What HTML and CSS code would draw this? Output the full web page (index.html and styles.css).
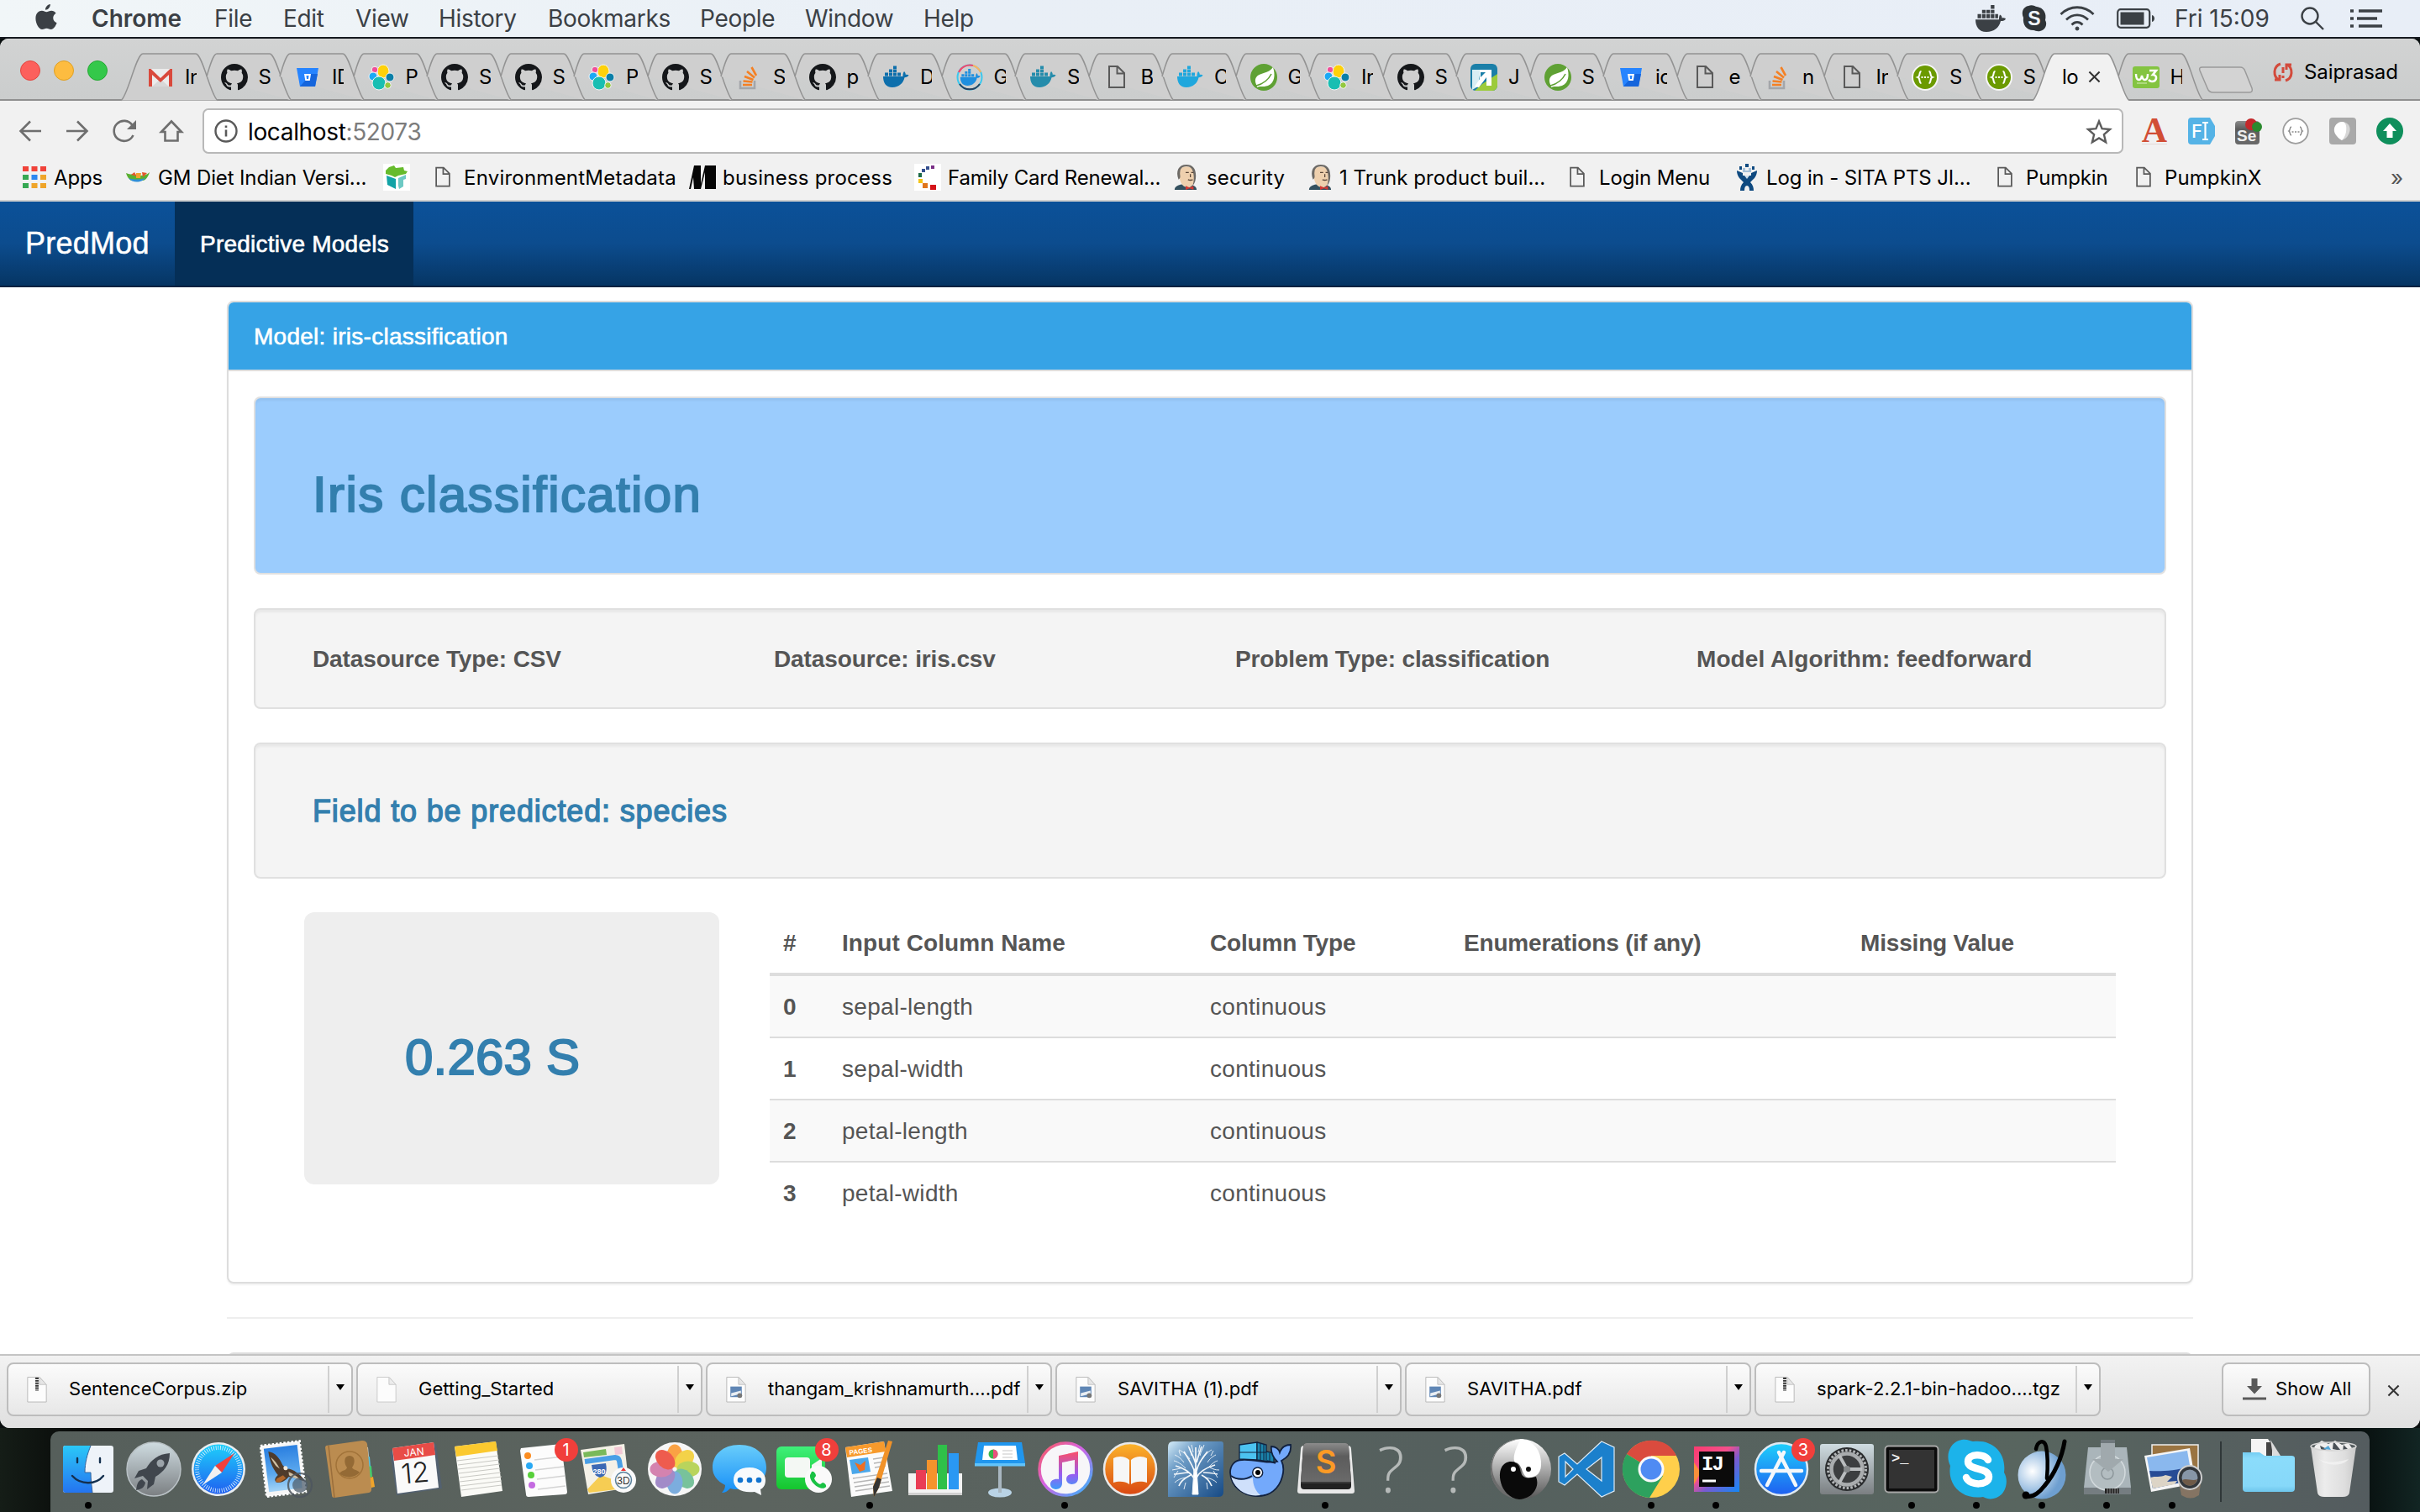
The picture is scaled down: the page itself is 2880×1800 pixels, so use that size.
FILE: index.html
```html
<!DOCTYPE html>
<html lang="en">
<head>
<meta charset="utf-8">
<title>PredMod</title>
<link rel="stylesheet" href="styles.css">
</head>
<body>
<svg class="defs" width="0" height="0">
  <defs>
    <linearGradient id="gFinder" x1="0" y1="0" x2="0" y2="1"><stop offset="0" stop-color="#2bc8f8"/><stop offset="1" stop-color="#2474f0"/></linearGradient>
    <linearGradient id="gSilver" x1="0" y1="0" x2="0" y2="1"><stop offset="0" stop-color="#cfdce1"/><stop offset="1" stop-color="#7b7f82"/></linearGradient>
    <linearGradient id="gBlue" x1="0" y1="0" x2="0" y2="1"><stop offset="0" stop-color="#1ed0fb"/><stop offset="1" stop-color="#1f5ff0"/></linearGradient>
    <linearGradient id="gSky" x1="0" y1="0" x2="0" y2="1"><stop offset="0" stop-color="#2a7fe0"/><stop offset=".6" stop-color="#5ba8ee"/><stop offset="1" stop-color="#a5d4f7"/></linearGradient>
    <linearGradient id="gMsg" x1="0" y1="0" x2="0" y2="1"><stop offset="0" stop-color="#69cdfb"/><stop offset="1" stop-color="#178ff7"/></linearGradient>
    <linearGradient id="gGreen" x1="0" y1="0" x2="0" y2="1"><stop offset="0" stop-color="#3ff07a"/><stop offset="1" stop-color="#15c52e"/></linearGradient>
    <linearGradient id="gOrange" x1="0" y1="0" x2="0" y2="1"><stop offset="0" stop-color="#fcb52b"/><stop offset="1" stop-color="#d94712"/></linearGradient>
    <linearGradient id="gTunes" x1="0" y1="0" x2="1" y2="1"><stop offset="0" stop-color="#fb5a57"/><stop offset=".45" stop-color="#d463e6"/><stop offset="1" stop-color="#2bb9fb"/></linearGradient>
    <linearGradient id="gNote" x1="0" y1="0" x2="0" y2="1"><stop offset="0" stop-color="#fb4f68"/><stop offset=".6" stop-color="#9a5cf0"/><stop offset="1" stop-color="#3d9bfa"/></linearGradient>
    <linearGradient id="gTree" x1="0" y1="0" x2="1" y2="1"><stop offset="0" stop-color="#d5ecf8"/><stop offset=".3" stop-color="#6d9cc6"/><stop offset="1" stop-color="#164a85"/></linearGradient>
    <linearGradient id="gDark" x1="0" y1="0" x2="0" y2="1"><stop offset="0" stop-color="#8b8b8b"/><stop offset=".35" stop-color="#5c5c5c"/><stop offset="1" stop-color="#6a6a6a"/></linearGradient>
    <linearGradient id="gYin" x1="0" y1="0" x2="0" y2="1"><stop offset="0" stop-color="#fff"/><stop offset="1" stop-color="#555"/></linearGradient>
    <linearGradient id="gFold" x1="0" y1="0" x2="0" y2="1"><stop offset="0" stop-color="#74cdf3"/><stop offset=".15" stop-color="#8bdcfb"/><stop offset=".85" stop-color="#86d8f9"/><stop offset="1" stop-color="#6ec6ec"/></linearGradient>
    <linearGradient id="gIj" x1="0" y1="0" x2="1" y2="1"><stop offset="0" stop-color="#fb3b6f"/><stop offset=".4" stop-color="#f4508c"/><stop offset=".6" stop-color="#7a5ad0"/><stop offset="1" stop-color="#1288f6"/></linearGradient>
    <radialGradient id="gOrb" cx=".3" cy=".42" r=".6"><stop offset="0" stop-color="#fff"/><stop offset=".6" stop-color="#a9c8e6"/><stop offset="1" stop-color="#6e9fd0"/></radialGradient>
    <linearGradient id="gTrash" x1="0" y1="0" x2="1" y2="0"><stop offset="0" stop-color="#d4d4d4"/><stop offset=".3" stop-color="#ececec"/><stop offset=".75" stop-color="#dedede"/><stop offset="1" stop-color="#c8c8c8"/></linearGradient>

    <!-- favicons, 32 x 32 -->
    <symbol id="f-doc" viewBox="0 0 32 32"><path d="M7 3h10l8 8v17H7z M16.500 3v8.500H25" fill="none" stroke="#5a5a5a" stroke-width="2"/></symbol>
    <symbol id="f-gmail" viewBox="0 0 32 32"><path d="M2 6h28v21H2z" fill="#ececec"/><path d="M6 27l10-9 10 9z" fill="#d8d8d8"/><path d="M2 27V6h2.500L16 17 27.500 6H30v21h-4V13L16 22 6 13v14z" fill="#d9493c"/></symbol>
    <symbol id="f-gh" viewBox="0 0 16 16"><path fill="#15171a" d="M8 0C3.580 0 0 3.580 0 8c0 3.540 2.290 6.530 5.470 7.590.4.070.55-.17.55-.38 0-.19-.01-.82-.01-1.490-2.010.37-2.530-.49-2.690-.94-.09-.23-.48-.94-.82-1.130-.28-.15-.68-.52-.01-.53.63-.01 1.080.58 1.230.82.720 1.210 1.870.87 2.330.66.070-.52.28-.87.510-1.070-1.780-.2-3.640-.89-3.640-3.950 0-.87.31-1.590.82-2.150-.08-.2-.36-1.020.08-2.120 0 0 .67-.21 2.200.82.64-.18 1.320-.27 2-.27s1.360.09 2 .27c1.530-1.040 2.200-.82 2.200-.82.44 1.100.16 1.920.08 2.120.51.56.82 1.270.82 2.150 0 3.070-1.870 3.750-3.650 3.950.29.25.54.73.54 1.480 0 1.070-.01 1.930-.01 2.200 0 .21.15.46.55.38A8.010 8.010 0 0016 8c0-4.420-3.580-8-8-8z"/></symbol>
    <symbol id="f-bb" viewBox="0 0 32 32"><path d="M3 5h26l-4 22H7z" fill="#2684ff"/><path d="M20 12h8l-3 15H7l6-7h6z" fill="#1565dc"/><path d="M12 12h8l-1.300 8h-5.400z" fill="#fff"/><path d="M14.500 14h3l-.5 4h-2z" fill="#2684ff"/></symbol>
    <symbol id="f-el" viewBox="0 0 32 32"><g stroke="#f4f4f4" stroke-width="1"><ellipse cx="18" cy="9" rx="7" ry="8" fill="#fed10a"/><circle cx="8" cy="7" r="3.800" fill="#f04e98"/><circle cx="6" cy="15" r="5" fill="#1ba9f5"/><circle cx="26" cy="16" r="5" fill="#0b7fa8"/><ellipse cx="13" cy="23" rx="8" ry="8" fill="#18beb2"/><circle cx="23.500" cy="25.500" r="3.800" fill="#93c83e"/></g></symbol>
    <symbol id="f-so" viewBox="0 0 32 32"><path d="M6 20v9h17v-9" fill="none" stroke="#a3a6aa" stroke-width="2.600"/><path d="M9 25h11M9.500 20.500l11 1M11 15l10.500 4M14 9l9 7.500M19.500 4l5.500 10" stroke="#f48024" stroke-width="2.600"/></symbol>
    <symbol id="f-dk" viewBox="0 0 32 32"><path d="M1 15h23.500c0-2 0-4 1.500-6 1 1 2 2.500 1.800 4 1.700-.4 3 0 3.700.6-1 2-3 2.700-5 2.700C25 23 20 28 12 28 4 28 1 22 1 15z"/><path d="M3 10.500h4v4H3zM8 10.500h4v4H8zM13 10.500h4v4h-4zM18 10.500h4v4h-4zM8 6.500h4V10H8zM13 6.500h4V10h-4zM13 2.500h4V6h-4z"/></symbol>
    <symbol id="f-ring" viewBox="0 0 32 32"><circle cx="16" cy="16" r="14.500" fill="none" stroke="#3bc8ee" stroke-width="2"/><path d="M3 10A14.500 14.500 0 0120 2" fill="none" stroke="#f4476b" stroke-width="2"/><path d="M20 2a14.500 14.500 0 019 8" fill="none" stroke="#fdb35e" stroke-width="2"/><path d="M4 24a14.500 14.500 0 0024 0" fill="none" stroke="#27405e" stroke-width="2"/><use href="#f-dk" x="4" y="4" width="25" height="25" fill="#1f8fe0"/></symbol>
    <symbol id="f-sp" viewBox="0 0 32 32"><circle cx="16" cy="16" r="16" fill="#5fa134"/><path d="M27 4c3 9 2 19-6 22-6 2-11 0-13 2 0-3-4-7-1-12C11 10 22 12 27 4z" fill="#fff"/><path d="M7 26c8-2 14-6 18-14" stroke="#5fa134" stroke-width="1.600" fill="none"/></symbol>
    <symbol id="f-fa" viewBox="0 0 32 32"><rect width="32" height="32" rx="6" fill="#1b7fa8"/><path d="M32 12v14a6 6 0 01-6 6H5l9-8z" fill="#9ccb3c"/><path d="M2 7h10l-3 20-7 4z" fill="#d9eef4"/><path d="M11 7h14v19h-6V16l-9 12-5-1 6-9z" fill="#fff"/><path d="M12 10h6l-6 6z" fill="#1b7fa8"/></symbol>
    <symbol id="f-sw" viewBox="0 0 32 32"><circle cx="16" cy="16" r="15" fill="#6b9a00" stroke="#f5f5f5" stroke-width="2"/><path d="M11.500 9c-3 0-1 6-4 7 3 1 1 7 4 7M20.500 9c3 0 1 6 4 7-3 1-1 7-4 7" fill="none" stroke="#fff" stroke-width="2"/><path d="M11.500 16h9" stroke="#fff" stroke-width="2.200" stroke-dasharray="2 1.500"/></symbol>
    <symbol id="f-w3" viewBox="0 0 32 32"><rect y="3" width="32" height="26" rx="3" fill="#84c441"/><path d="M4 12c0 9 6 9 7 2 1 7 7 7 7-2" fill="none" stroke="#fff" stroke-width="2.400"/><path d="M20 8h8l-4 5c6 0 5 8-1 8-2 0-3-1-4-2" fill="none" stroke="#fff" stroke-width="2.600"/><path d="M5 23h12" stroke="#d8f0b8" stroke-width="1.200"/></symbol>
    <symbol id="f-jk" viewBox="0 0 32 32"><path d="M2 32c0-5 5-6 9-7h11c4 1 8 3 8 7z" fill="#33505f"/><path d="M8 8c2-8 20-8 20 4 0 12-4 17-9 17-8 0-12-9-11-21z" fill="#eed0ae"/><path d="M7 19C3 8 7 0 17 0c8 0 12 5 12 14 0 5-1 9-4 13 1-5 2-8 1-15-1-7-4-10-9-10C11 2 9 6 9 9c-1 4 2 7-2 10z" fill="#6d6a66"/><path d="M16 10h4M23 10h3M19 19c2 1 4 1 6 0M22 12v4" stroke="#5a4638" stroke-width="1.400" fill="none"/><path d="M16 27l5 2 5-2v5l-5-2-5 2z" fill="#d33833"/></symbol>
  </defs>
</svg>

<header class="menubar">
  <svg class="apple" viewBox="0 0 26 32"><path fill="#3b4045" d="M18 0c.3 3-2.500 7-6 7C11.600 4 14.500.5 18 0zM25 11c-5 3-4.500 9.500 1 12-1.500 4-4 8-7 8-2.200 0-3-1.300-5.500-1.300S10 31 8 31C4 31 0 23.500 0 17.500 0 11 4 8 7.600 8c2.400 0 4.200 1.500 5.700 1.500S17 8 19.500 8C21.500 8 23.700 9 25 11z"/></svg>
  <nav class="menus"><b class="m1">Chrome</b><span class="m2">File</span><span class="m3">Edit</span><span class="m4">View</span><span class="m5">History</span><span class="m6">Bookmarks</span><span class="m7">People</span><span class="m8">Window</span><span class="m9">Help</span></nav>
  <div class="status">
    <svg width="36" height="32" viewBox="0 0 36 28" preserveAspectRatio="none" fill="#3b4045"><path d="M0 15h28c0-2 0-3 1-5 2 1 2.500 2 2.500 3.500 1.500-.3 3.500 0 4.500.7-1 2-3 2.500-6 2.500C28 24 22 28 13 28 4 28 0 22 0 15z"/><path d="M2.500 9.500h4.300v4.300H2.500zM7.800 9.500h4.300v4.300H7.800zM13 9.500h4.300v4.300H13zM18.200 9.500h4.300v4.300h-4.300zM23.400 9.500h3.500v4.300h-3.500zM7.800 5h4.300v3.500H7.800zM13 5h4.300v3.500H13zM18.200 5h4.300v3.500h-4.300zM18.200 0h4.300v4h-4.300z"/></svg>
    <svg class="s-skype" width="32" height="32" viewBox="0 0 32 32"><path d="M9 1c5-2 8 1 10 1 8 1 12 8 10 16 3 5 0 12-6 13-4 1-6-1-8-1C6 30 2 23 3 15 0 8 3 2 9 1z" fill="#2f3438"/><text x="16" y="24" text-anchor="middle" class="t-sk">S</text></svg>
    <svg class="s-wifi" width="42" height="30" viewBox="0 0 42 30" fill="none" stroke="#3b4045" stroke-width="2.800"><path d="M1.500 10c11-11 28-11 39 0M8 16.500c7.500-7.500 18.500-7.500 26 0M14.500 22.500c4-4 9-4 13 0"/><circle cx="21" cy="27" r="2" fill="#3b4045" stroke-width="1"/></svg>
    <svg class="s-batt" width="46" height="24" viewBox="0 0 46 24"><rect x="1.200" y="1.200" width="38" height="21.600" rx="3.500" fill="none" stroke="#3b4045" stroke-width="2.200"/><rect x="4.500" y="4.500" width="28" height="15" fill="#3b4045"/><path d="M42 8c4 1 4 7 0 8z" fill="#3b4045"/></svg>
    <span class="clock">Fri 15:09</span>
    <svg class="s-find" width="30" height="28" viewBox="0 0 30 28" fill="none" stroke="#3b4045" stroke-width="2.400"><circle cx="12" cy="11" r="9.500"/><path d="M19 18l9 9"/></svg>
    <svg class="s-list" width="38" height="22" viewBox="0 0 38 22" fill="none" stroke="#3b4045" stroke-width="3.600"><path d="M0 2h4M10 2h28M0 11h4M8 11h24M0 20h4M10 20h28"/></svg>
  </div>
</header>

<main class="window">
  <div class="tabstrip">
    <div class="lights"><i class="red"></i><i class="yellow"></i><i class="green"></i></div>
    <div class="tabs">
      <div class="tab"><svg class="shape" viewBox="0 0 116 57"><path d="M0 56.500C8 52 18 1 26 1h63C97 1 107 52 115 56.500"/></svg><svg class="fav"><use href="#f-gmail"/></svg><span>In</span></div>
      <div class="tab"><svg class="shape" viewBox="0 0 116 57"><path d="M14 28C18 14 22 1 26 1h63C97 1 107 52 115 56.500"/></svg><svg class="fav"><use href="#f-gh"/></svg><span>S</span></div>
      <div class="tab"><svg class="shape" viewBox="0 0 116 57"><path d="M14 28C18 14 22 1 26 1h63C97 1 107 52 115 56.500"/></svg><svg class="fav"><use href="#f-bb"/></svg><span>ID</span></div>
      <div class="tab"><svg class="shape" viewBox="0 0 116 57"><path d="M14 28C18 14 22 1 26 1h63C97 1 107 52 115 56.500"/></svg><svg class="fav"><use href="#f-el"/></svg><span>P</span></div>
      <div class="tab"><svg class="shape" viewBox="0 0 116 57"><path d="M14 28C18 14 22 1 26 1h63C97 1 107 52 115 56.500"/></svg><svg class="fav"><use href="#f-gh"/></svg><span>S</span></div>
      <div class="tab"><svg class="shape" viewBox="0 0 116 57"><path d="M14 28C18 14 22 1 26 1h63C97 1 107 52 115 56.500"/></svg><svg class="fav"><use href="#f-gh"/></svg><span>S</span></div>
      <div class="tab"><svg class="shape" viewBox="0 0 116 57"><path d="M14 28C18 14 22 1 26 1h63C97 1 107 52 115 56.500"/></svg><svg class="fav"><use href="#f-el"/></svg><span>P</span></div>
      <div class="tab"><svg class="shape" viewBox="0 0 116 57"><path d="M14 28C18 14 22 1 26 1h63C97 1 107 52 115 56.500"/></svg><svg class="fav"><use href="#f-gh"/></svg><span>S</span></div>
      <div class="tab"><svg class="shape" viewBox="0 0 116 57"><path d="M14 28C18 14 22 1 26 1h63C97 1 107 52 115 56.500"/></svg><svg class="fav"><use href="#f-so"/></svg><span>S</span></div>
      <div class="tab"><svg class="shape" viewBox="0 0 116 57"><path d="M14 28C18 14 22 1 26 1h63C97 1 107 52 115 56.500"/></svg><svg class="fav"><use href="#f-gh"/></svg><span>p</span></div>
      <div class="tab"><svg class="shape" viewBox="0 0 116 57"><path d="M14 28C18 14 22 1 26 1h63C97 1 107 52 115 56.500"/></svg><svg class="fav dk1"><use href="#f-dk"/></svg><span>D</span></div>
      <div class="tab"><svg class="shape" viewBox="0 0 116 57"><path d="M14 28C18 14 22 1 26 1h63C97 1 107 52 115 56.500"/></svg><svg class="fav"><use href="#f-ring"/></svg><span>G</span></div>
      <div class="tab"><svg class="shape" viewBox="0 0 116 57"><path d="M14 28C18 14 22 1 26 1h63C97 1 107 52 115 56.500"/></svg><svg class="fav dk2"><use href="#f-dk"/></svg><span>S</span></div>
      <div class="tab"><svg class="shape" viewBox="0 0 116 57"><path d="M14 28C18 14 22 1 26 1h63C97 1 107 52 115 56.500"/></svg><svg class="fav"><use href="#f-doc"/></svg><span>B</span></div>
      <div class="tab"><svg class="shape" viewBox="0 0 116 57"><path d="M14 28C18 14 22 1 26 1h63C97 1 107 52 115 56.500"/></svg><svg class="fav dk3"><use href="#f-dk"/></svg><span>C</span></div>
      <div class="tab"><svg class="shape" viewBox="0 0 116 57"><path d="M14 28C18 14 22 1 26 1h63C97 1 107 52 115 56.500"/></svg><svg class="fav"><use href="#f-sp"/></svg><span>G</span></div>
      <div class="tab"><svg class="shape" viewBox="0 0 116 57"><path d="M14 28C18 14 22 1 26 1h63C97 1 107 52 115 56.500"/></svg><svg class="fav"><use href="#f-el"/></svg><span>In</span></div>
      <div class="tab"><svg class="shape" viewBox="0 0 116 57"><path d="M14 28C18 14 22 1 26 1h63C97 1 107 52 115 56.500"/></svg><svg class="fav"><use href="#f-gh"/></svg><span>S</span></div>
      <div class="tab"><svg class="shape" viewBox="0 0 116 57"><path d="M14 28C18 14 22 1 26 1h63C97 1 107 52 115 56.500"/></svg><svg class="fav"><use href="#f-fa"/></svg><span>J</span></div>
      <div class="tab"><svg class="shape" viewBox="0 0 116 57"><path d="M14 28C18 14 22 1 26 1h63C97 1 107 52 115 56.500"/></svg><svg class="fav"><use href="#f-sp"/></svg><span>S</span></div>
      <div class="tab"><svg class="shape" viewBox="0 0 116 57"><path d="M14 28C18 14 22 1 26 1h63C97 1 107 52 115 56.500"/></svg><svg class="fav"><use href="#f-bb"/></svg><span>ic</span></div>
      <div class="tab"><svg class="shape" viewBox="0 0 116 57"><path d="M14 28C18 14 22 1 26 1h63C97 1 107 52 115 56.500"/></svg><svg class="fav"><use href="#f-doc"/></svg><span>e</span></div>
      <div class="tab"><svg class="shape" viewBox="0 0 116 57"><path d="M14 28C18 14 22 1 26 1h63C97 1 107 52 115 56.500"/></svg><svg class="fav"><use href="#f-so"/></svg><span>n</span></div>
      <div class="tab"><svg class="shape" viewBox="0 0 116 57"><path d="M14 28C18 14 22 1 26 1h63C97 1 107 52 115 56.500"/></svg><svg class="fav"><use href="#f-doc"/></svg><span>In</span></div>
      <div class="tab"><svg class="shape" viewBox="0 0 116 57"><path d="M14 28C18 14 22 1 26 1h63C97 1 107 52 115 56.500"/></svg><svg class="fav"><use href="#f-sw"/></svg><span>S</span></div>
      <div class="tab"><svg class="shape" viewBox="0 0 116 57"><path d="M14 28C18 14 22 1 26 1h63C97 1 107 52 115 56.500"/></svg><svg class="fav"><use href="#f-sw"/></svg><span>S</span></div>
      <div class="tab active"><svg class="shape" viewBox="0 0 116 58"><path class="fill" d="M0 58C8 52 18 1 26 1h63C97 1 107 52 116 58z"/><path d="M0 56.500C8 52 18 1 26 1h63C97 1 107 52 115 56.500"/></svg><span>lo</span><svg class="close" viewBox="0 0 16 16"><path d="M1.500 1.500l13 13M14.500 1.500l-13 13"/></svg></div>
      <div class="tab"><svg class="shape" viewBox="0 0 116 57"><path d="M14 28C18 14 22 1 26 1h63C97 1 107 52 115 56.500"/></svg><svg class="fav"><use href="#f-w3"/></svg><span>H</span></div>
    </div>
    <svg class="newtab" viewBox="0 0 66 32"><path d="M5 1h45c4 0 5 2 6 5l8 20c1 3 0 5-3 5H18c-4 0-6-2-7-5L2 5C1 2 2 1 5 1z"/></svg>
    <div class="profile"><svg width="26" height="24" viewBox="0 0 26 24" fill="none" stroke="#d34b3c" stroke-width="3"><path d="M10 2C1 5 1 17 8 21M3 21h6v-6M16 22c9-3 9-15 2-19M23 3h-6v6M13 6v7M13 16v3"/></svg><span>Saiprasad</span></div>
  </div>

  <div class="toolbar">
    <div class="navicons">
      <svg viewBox="0 0 28 28"><path d="M27 14H3M14 2.500L2.500 14 14 25.500"/></svg>
      <svg viewBox="0 0 28 28"><path d="M1 14h24M14 2.500L25.500 14 14 25.500"/></svg>
      <svg viewBox="0 0 28 28"><path d="M24.500 19A12 12 0 1123.500 7"/><path d="M28 1v11H17z" fill="#6e6e6e" stroke="none"/></svg>
      <svg viewBox="0 0 28 28"><path d="M14 2.500L2 15h4.500v10.500h15V15H26z"/></svg>
    </div>
    <div class="omnibox">
      <svg width="28" height="28" viewBox="0 0 28 28"><circle cx="14" cy="14" r="12.500" fill="none" stroke="#5a5a5a" stroke-width="2.400"/><path d="M14 12.500v8M14 7.500v2.600" stroke="#5a5a5a" stroke-width="2.600"/></svg>
      <span class="url">localhost<i>:52073</i></span>
      <svg class="star" width="30" height="29" viewBox="0 0 30 29"><path d="M15 2.500l3.600 8.700 9.400.8-7.100 6.200 2.200 9.100-8.100-4.900-8.100 4.900 2.200-9.100L2 12l9.400-.8z" fill="none" stroke="#5c5c5c" stroke-width="2.400"/></svg>
    </div>
    <div class="exts">
      <svg viewBox="0 0 32 32"><text x="16" y="29" text-anchor="middle" class="t-a">A</text><path d="M1 31.500h30" stroke="#e6d9d6"/></svg>
      <svg viewBox="0 0 32 32"><path d="M4 0h22l6 10v12l-6 10H4q-4 0-4-4V4q0-4 4-4z" fill="#55b3e6"/><text x="4" y="24" class="t-f">F</text><path d="M17 6h7M20.500 6v20M17 26h7" stroke="#fff" stroke-width="2.200"/></svg>
      <svg viewBox="0 0 32 32"><rect y="4" width="29" height="28" rx="4" fill="url(#gDark)"/><text x="2" y="28" class="t-se">Se</text><circle cx="19" cy="8" r="7" fill="#c4282b"/><circle cx="26" cy="11" r="6" fill="#2a8a2e"/></svg>
      <svg viewBox="0 0 32 32"><circle cx="16" cy="16" r="14.800" fill="#fff" stroke="#9d9d9d" stroke-width="1.800"/><path d="M11 11c-2.500 0-1 4-3 5 2 1 .5 5 3 5M21 11c2.500 0 1 4 3 5-2 1-.5 5-3 5" fill="none" stroke="#888" stroke-width="1.400"/><path d="M11.500 17h9" stroke="#888" stroke-width="1.600" stroke-dasharray="2 1.500"/></svg>
      <svg viewBox="0 0 32 32"><rect width="32" height="32" rx="4" fill="#a9a9a9"/><path d="M17 5c8 2 9 9 6 15-2 4-5 6-8 7-5-3-9-9-9-13 1-6 6-9 11-9z" fill="#d6d6d6"/><path d="M15 5c5 0 6 6 5 12-1 5-3 8-5 10C8 23 5 17 6 13c1-5 5-8 9-8z" fill="#fff"/></svg>
      <svg viewBox="0 0 32 32"><circle cx="16" cy="16" r="16" fill="#0f8f5c"/><path d="M16 7l8 9h-4.500v8h-7v-8H8z" fill="#fff"/></svg>
    </div>
  </div>

  <div class="bookmarks">
    <span class="bm b1"><svg width="28" height="28" viewBox="0 0 28 28"><path d="M0 1h7v6H0zM10.500 1h7v6h-7zM21 1h7v6h-7z" fill="#f0433a"/><path d="M0 11h7v6H0zM0 21h7v6H0z" fill="#36a853"/><path d="M10.500 11h7v6h-7z" fill="#2c87f0"/><path d="M21 11h7v6h-7zM10.500 21h7v6h-7zM21 21h7v6h-7z" fill="#efa52a"/></svg><em>Apps</em></span>
    <span class="bm b2"><svg width="28" height="28" viewBox="0 0 28 28"><path d="M0 9c4 2 7 1 9 2l8 1c4 0 8-1 11-4-2 7-6 10-8 10H6c-3-2-5-5-6-9z" fill="#59b031"/><path d="M6 11l4-3 3 5zM19 8l6 1-5 5z" fill="#e2562b"/><path d="M12 9h6l-1 6h-5z" fill="#f0a42c"/><path d="M3 15c7 2 13 2 20 0-3 5-15 7-20 0z" fill="#2f8fd6"/></svg><em>GM Diet Indian Versi...</em></span>
    <span class="bm b3"><svg width="32" height="32" viewBox="0 0 32 32"><rect width="32" height="32" fill="#fff"/><path d="M3 8l4-4 6-2 2 3 9-1 1 4 4 1-2 3-9 2-4 2-4-2-7-2z" fill="#66bb2c"/><path d="M4 14l11 4v12L5 25z" fill="#12a3a6"/><path d="M18 17l9-4v5l-3 1v8l-5 3-1-4z" fill="#6dc9c4"/></svg></span>
    <span class="bm b4"><svg width="28" height="28"><use href="#f-doc"/></svg><em>EnvironmentMetadata</em></span>
    <span class="bm b5"><svg width="32" height="32" viewBox="0 0 32 32"><path d="M0 30L6 2h8v22L19 2h13v28H19V10l-5 20H6L5 16 2 30z" fill="#060606"/></svg><em>business process</em></span>
    <span class="bm b6"><svg width="32" height="32" viewBox="0 0 32 32"><rect width="32" height="32" fill="#fff"/><path d="M20 2h4v4h-4z" fill="#7a2f86"/><path d="M14 3h4v4h-4zM9 6h4v4H9z" fill="#35508f"/><path d="M5 11h4v5H5z" fill="#1d6b48"/><path d="M5 18h5v5H5z" fill="#f3c417"/><path d="M10 23h6v6h-6z" fill="#e0761d"/><path d="M19 25h7v6h-7z" fill="#d4141a"/></svg><em>Family Card Renewal...</em></span>
    <span class="bm b7"><svg width="30" height="32"><use href="#f-jk"/></svg><em>security</em></span>
    <span class="bm b8"><svg width="30" height="32"><use href="#f-jk"/></svg><em>1 Trunk product buil...</em></span>
    <span class="bm b9"><svg width="28" height="28"><use href="#f-doc"/></svg><em>Login Menu</em></span>
    <span class="bm b10"><svg width="28" height="32" viewBox="0 0 28 32"><path d="M5 3h3v4H5zM12 0h4v4h-4zM20 3h3v4h-3zM2 8l7 3v3h10v-3l7-3c0 7-4 10-8 14 3 3 4 6 4 10h-5c0-4-1-6-3-6s-3 2-3 6H6c0-4 1-7 4-10C6 18 2 15 2 8z" fill="#0f4a80"/><path d="M9 5h3v3h4V5h3v5H9z" fill="#a5c1da"/><path d="M11 14h6l-3 4z" fill="#cfdfec"/></svg><em>Log in - SITA PTS JI...</em></span>
    <span class="bm b11"><svg width="28" height="28"><use href="#f-doc"/></svg><em>Pumpkin</em></span>
    <span class="bm b12"><svg width="28" height="28"><use href="#f-doc"/></svg><em>PumpkinX</em></span>
    <span class="more">»</span>
  </div>

  <section class="page">
    <nav class="navbar"><a class="brand">PredMod</a><a class="navlink">Predictive Models</a></nav>
    <div class="container">
      <article class="panel">
        <div class="panel-heading">Model: iris-classification</div>
        <div class="panel-body">
          <div class="well hero"><h2>Iris classification</h2></div>
          <div class="well info"><b>Datasource Type: CSV</b><b>Datasource: iris.csv</b><b>Problem Type: classification</b><b class="wide">Model Algorithm: feedforward</b></div>
          <div class="well field"><h4>Field to be predicted: species</h4></div>
          <div class="result">
            <div class="score"><h2>0.263 S</h2></div>
            <table>
              <colgroup><col class="c1"><col class="c2"><col class="c3"><col class="c4"><col class="c5"></colgroup>
              <thead><tr><th>#</th><th class="wide">Input Column Name</th><th>Column Type</th><th>Enumerations (if any)</th><th>Missing Value</th></tr></thead>
              <tbody>
                <tr><th>0</th><td>sepal-length</td><td>continuous</td><td></td><td></td></tr>
                <tr><th>1</th><td>sepal-width</td><td>continuous</td><td></td><td></td></tr>
                <tr><th>2</th><td>petal-length</td><td>continuous</td><td></td><td></td></tr>
                <tr><th>3</th><td>petal-width</td><td>continuous</td><td></td><td></td></tr>
              </tbody>
            </table>
          </div>
        </div>
      </article>
      <hr>
      <div class="footer-panel"></div>
    </div>
  </section>

  <footer class="shelf">
    <div class="dl"><svg viewBox="0 0 24 32"><path d="M.5.500h14.500l8.500 9v21.500H.5z" fill="#fcfcfc" stroke="#b9b9b9"/><path d="M15 .5v9h8.500z" fill="#e6e6e6" stroke="#c2c2c2"/><path d="M12 1v16" stroke="#333" stroke-width="4" stroke-dasharray="2 1"/></svg><span>SentenceCorpus.zip</span><i></i></div>
    <div class="dl"><svg viewBox="0 0 24 32"><path d="M.5.500h14.500l8.500 9v21.500H.5z" fill="#fcfcfc" stroke="#c9c9c9"/><path d="M15 .5v9h8.500z" fill="#ececec" stroke="#c9c9c9"/></svg><span>Getting_Started</span><i></i></div>
    <div class="dl"><svg viewBox="0 0 24 32"><path d="M.5.500h14.500l8.500 9v21.500H.5z" fill="#fcfcfc" stroke="#b9b9b9"/><path d="M15 .5v9h8.500z" fill="#e6e6e6" stroke="#c2c2c2"/><path d="M5 12h14v13H5z" fill="#5f86b5"/><path d="M6 20l12-3v4l-12 3z" fill="#e9eef3"/><circle cx="16.500" cy="23" r="3" fill="#777"/></svg><span>thangam_krishnamurth....pdf</span><i></i></div>
    <div class="dl"><svg viewBox="0 0 24 32"><path d="M.5.500h14.500l8.500 9v21.500H.5z" fill="#fcfcfc" stroke="#b9b9b9"/><path d="M15 .5v9h8.500z" fill="#e6e6e6" stroke="#c2c2c2"/><path d="M5 12h14v13H5z" fill="#5f86b5"/><path d="M6 20l12-3v4l-12 3z" fill="#e9eef3"/><circle cx="16.500" cy="23" r="3" fill="#777"/></svg><span>SAVITHA (1).pdf</span><i></i></div>
    <div class="dl"><svg viewBox="0 0 24 32"><path d="M.5.500h14.500l8.500 9v21.500H.5z" fill="#fcfcfc" stroke="#b9b9b9"/><path d="M15 .5v9h8.500z" fill="#e6e6e6" stroke="#c2c2c2"/><path d="M5 12h14v13H5z" fill="#5f86b5"/><path d="M6 20l12-3v4l-12 3z" fill="#e9eef3"/><circle cx="16.500" cy="23" r="3" fill="#777"/></svg><span>SAVITHA.pdf</span><i></i></div>
    <div class="dl"><svg viewBox="0 0 24 32"><path d="M.5.500h14.500l8.500 9v21.500H.5z" fill="#fcfcfc" stroke="#b9b9b9"/><path d="M15 .5v9h8.500z" fill="#e6e6e6" stroke="#c2c2c2"/><path d="M12 1v16" stroke="#333" stroke-width="4" stroke-dasharray="2 1"/></svg><span>spark-2.2.1-bin-hadoo....tgz</span><i></i></div>
    <div class="showall"><svg width="28" height="26" viewBox="0 0 28 26" fill="#5a5a5a"><path d="M10.500 0h7v9H23l-9 9.500L5 9h5.500zM0 22.500h28v3H0z"/></svg><span>Show All</span></div>
    <svg class="shelfclose" viewBox="0 0 16 16"><path d="M1.500 1.500l13 13M14.500 1.500l-13 13"/></svg>
  </footer>
</main>

<div class="desktop">
  <div class="dock">
    <div class="app on"><svg viewBox="0 0 72 72"><rect x="6" y="8" width="60" height="56" rx="3" fill="#eef3f9"/><path d="M9 8h30c-4 10-7 20-7 32h7c0 8 1 16 2 24H9q-3 0-3-3V11q0-3 3-3z" fill="url(#gFinder)"/><path d="M39 8c-4 10-7 20-7 32h7c0 8 1 16 2 24" fill="none" stroke="#37659c" stroke-width="1"/><path d="M23 23v5M50 23v5M17 44c10 11 28 11 37 0" fill="none" stroke="#14304f" stroke-width="2.400" stroke-linecap="round"/></svg></div>
    <div class="app"><svg viewBox="0 0 72 72"><circle cx="36" cy="36" r="32" fill="url(#gSilver)" stroke="#b9c1c5" stroke-width="1.500"/><path d="M55 17c-14 1-22 8-28 18l-9 3-5 9 10-3 6 6-1 10 8-6 2-9c10-6 17-14 17-28z" fill="#40464d"/><circle cx="44" cy="29" r="4.500" fill="#9ba3a9"/><path d="M22 48c-6 2-6 8-7 13 6-1 10-3 11-9z" fill="#40464d"/></svg></div>
    <div class="app"><svg viewBox="0 0 72 72"><circle cx="36" cy="36" r="32" fill="#e9edf0"/><circle cx="36" cy="36" r="29.500" fill="url(#gBlue)"/><circle cx="36" cy="36" r="25.500" fill="none" stroke="#dff1fc" stroke-width="5" stroke-dasharray=".8 1.900"/><path d="M55 17L40 40l-8-8z" fill="#f2403c"/><path d="M17 55l15-23 8 8z" fill="#f1f1f1"/></svg></div>
    <div class="app"><svg viewBox="0 0 72 72"><g transform="rotate(-7 36 36)"><rect x="11.500" y="5" width="47" height="61" fill="#f6f6f6" stroke="#fff" stroke-width="2.600" stroke-dasharray="2.600 2"/><rect x="15" y="9" width="40" height="52" fill="url(#gSky)"/><path d="M20 13c8 2 12 9 15 18l4 5c7 0 15 8 21 18-9-3-14-8-20-8-3 3-8 6-14 5-4-3-2-6 2-9-3-4-8-14-8-29z" fill="#4f3b2b"/><path d="M22 20c4 4 7 9 9 15l-4-4c-2-3-4-7-5-11zM41 40c4 2 9 6 12 10-5-1-9-3-12-6z" fill="#cdbfa4"/><path d="M26 46l8-3 3 4-8 4-5-1z" fill="#b0672c"/><circle cx="38" cy="35" r="2.500" fill="#f0e8dc"/></g><circle cx="55" cy="55" r="14" fill="none" stroke="#4d565e" stroke-width="2.200" opacity=".85"/><circle cx="55" cy="55" r="9" fill="#4f5f6d" opacity=".75"/></svg></div>
    <div class="app"><svg viewBox="0 0 72 72"><path d="M50 8l9 2 4 50-9 3z" fill="#d9dedc"/><path d="M55 21h6l1 13h-6z" fill="#55c4e4"/><path d="M57 34l6-2 1 13-6 2z" fill="#45cc6b"/><path d="M58 47l7-2 2 12-8 2z" fill="#efa42b"/><path d="M9 8l43-6q5 0 6 4l5 54q0 3-3 4L19 70q-3 0-3-3L8 10z" fill="#bb8c50"/><path d="M12 8l7 62" stroke="#9a6e3b" stroke-width="1.500"/><circle cx="37" cy="31" r="16" fill="none" stroke="#95682f" stroke-width="1.500" opacity=".7"/><path d="M37 20c7 0 7 9 3 14 1 3 7 3 9 6-6 7-18 7-24 1 3-4 8-3 9-7-4-5-4-14 3-14z" fill="#946a35"/></svg></div>
    <div class="app"><svg viewBox="0 0 72 72"><path d="M7 15l55-9 7 53-54 8z" fill="#536170"/><path d="M10 11l49-7 6 54-49 7z" fill="#fafafa"/><path d="M10 11l49-7 2 15-49 7z" fill="#e84c47"/><text x="36" y="20" text-anchor="middle" class="t-jan" transform="rotate(-5 36 20)">JAN</text><text x="38" y="52" text-anchor="middle" class="t-12" transform="rotate(-5 38 52)">12</text></svg></div>
    <div class="app"><svg viewBox="0 0 72 72"><path d="M7 9l49-6 8 59-49 7z" fill="#fbfbf7"/><path d="M7 9l49-6 2 11-49 7z" fill="#fbc92f"/><path d="M10 26l49-6M11 31l49-6M11 36l50-6M12 41l49-6M13 46l49-6M13 51l50-6M14 56l49-6M15 61l48-6" stroke="#c9c9c4"/></svg></div>
    <div class="app"><svg viewBox="0 0 72 72"><path d="M8 11l48-5 7 57q0 3-3 3l-43 3q-3 0-3-3L7 14z" fill="#fcfcfc"/><circle cx="16" cy="20" r="4" fill="#fb8d20"/><circle cx="18" cy="32" r="4" fill="#29a9f4"/><circle cx="20" cy="43" r="4" fill="#58d03a"/><circle cx="21" cy="55" r="4" fill="#c46ae0"/><path d="M24 25l34-4M25 37l34-4M27 48l33-4M28 60l33-4" stroke="#d4d4d4" stroke-width="1.500"/></svg><b class="badge">1</b></div>
    <div class="app"><svg viewBox="0 0 72 72"><path d="M2 13l52-7 6 52-49 8z" fill="#f4f1e7"/><path d="M5 16l27-4 1 7-27 3z" fill="#79b95b"/><path d="M42 10l9-1 1 9-9 1z" fill="#f4c8d5"/><path d="M7 27l36-5q4 0 5 4l2 12" fill="none" stroke="#4a9fe6" stroke-width="6"/><path d="M10 60l16-17 22 8-3 9-33 4z" fill="#f6cd53"/><path d="M15 31l17-2q3 15-7 17-9-2-10-15z" fill="#3c69b4"/><text x="24" y="42" text-anchor="middle" class="t-280">280</text><circle cx="53" cy="49" r="15" fill="#fafafa"/><circle cx="53" cy="49" r="9.500" fill="none" stroke="#59809b" stroke-width="1.500"/><path d="M50 38l3-4 3 4z" fill="#e33"/><text x="53" y="53.500" text-anchor="middle" class="t-3d">3D</text></svg></div>
    <div class="app"><svg viewBox="0 0 72 72"><circle cx="36" cy="36" r="32" fill="#f6f6f6"/><g opacity=".9"><ellipse cx="36" cy="20" rx="9.500" ry="13.500" fill="#fb9a31"/><ellipse cx="36" cy="20" rx="9.500" ry="13.500" fill="#f3cf37" transform="rotate(45 36 36)"/><ellipse cx="36" cy="20" rx="9.500" ry="13.500" fill="#b3d14c" transform="rotate(90 36 36)"/><ellipse cx="36" cy="20" rx="9.500" ry="13.500" fill="#6bbd92" transform="rotate(135 36 36)"/><ellipse cx="36" cy="20" rx="9.500" ry="13.500" fill="#6fa6dc" transform="rotate(180 36 36)"/><ellipse cx="36" cy="20" rx="9.500" ry="13.500" fill="#9a80c4" transform="rotate(225 36 36)"/><ellipse cx="36" cy="20" rx="9.500" ry="13.500" fill="#d177a8" transform="rotate(270 36 36)"/><ellipse cx="36" cy="20" rx="9.500" ry="13.500" fill="#ee4c3c" transform="rotate(315 36 36)"/></g></svg></div>
    <div class="app"><svg viewBox="0 0 72 72"><path d="M36 7c20 0 32 12 32 27S56 60 36 60c-5 0-8 0-11-1-3 3-6 5-10 5 3-3 4-6 4-9C9 50 4 43 4 34 4 19 16 7 36 7z" fill="url(#gMsg)"/><path d="M48 34c12 0 19 7 19 15 0 5-2 9-6 11l1 7-8-4c-16 2-25-5-25-14S36 34 48 34z" fill="#f8fafc"/><circle cx="37" cy="49" r="3.300" fill="#1173cf"/><circle cx="48" cy="49" r="3.300" fill="#1173cf"/><circle cx="59" cy="49" r="3.300" fill="#1173cf"/></svg></div>
    <div class="app"><svg viewBox="0 0 72 72"><rect x="2" y="9" width="58" height="51" rx="6" fill="url(#gGreen)"/><rect x="12" y="22" width="30" height="24" rx="4" fill="#f4f8f4"/><path d="M44 31l12-8v22l-12-7z" fill="#f4f8f4"/><circle cx="52" cy="48" r="16" fill="#fafafa"/><path d="M44 39c3-1 5 3 5 5l-2 3c1 3 4 6 7 7l3-2c2 0 5 3 4 5-4 6-20-4-19-14z" fill="#19c244"/></svg><b class="badge">8</b></div>
    <div class="app on"><svg viewBox="0 0 72 72"><path d="M7 10l46-7 10 59-49 7z" fill="#fbfbfb"/><path d="M7 10l46-7 2 12-46 7z" fill="#f79a2c"/><text x="12" y="19" class="t-pg" transform="rotate(-7 12 19)">PAGES</text><path d="M12 25l22-3 3 17-22 3z" fill="#4aa7ea"/><path d="M24 39l-6-11 7 3 6-5-1 11z" fill="#ee6f21"/><path d="M40 24l13-2M41 29l13-2M42 34l13-2M16 47l41-6M17 52l41-6M18 57l41-6M19 62l41-6" stroke="#b6b6b6" stroke-width="1.400"/><path d="M58 2l5 1-16 55-6 11-1-12z" fill="#f19228"/><path d="M45 46l5 2-3 10-6 11-1-12z" fill="#333"/></svg></div>
    <div class="app"><svg viewBox="0 0 72 72"><path d="M4 41h64v25H4z" fill="#f3f3f3"/><path d="M13 37h12v23H13z" fill="#ea3d55"/><path d="M26 25h12v35H26z" fill="#f5932c"/><path d="M39 7h11v53H39z" fill="#2fc049"/><path d="M52 17h12v43H52z" fill="#2a98f3"/><path d="M4 64h64v3H4z" fill="#d0d0d0"/></svg></div>
    <div class="app"><svg viewBox="0 0 72 72"><ellipse cx="36" cy="64" rx="14" ry="5.500" fill="#b9d3e6"/><path d="M34 30h4v34h-4z" fill="#a9b7c1"/><path d="M10 4h52l4 25H6z" fill="#2096ee"/><path d="M6 29h60v3.500H6z" fill="#62c3fa"/><path d="M17 8h38l2 17H15z" fill="#fff"/><circle cx="28" cy="18" r="5.500" fill="#36b54a"/><path d="M28 18v-5.500a5.500 5.500 0 010 11z" fill="#ea4f7d"/><path d="M39 14h12M39 18h12M39 22h12" stroke="#c5c5c5"/></svg></div>
    <div class="app on"><svg viewBox="0 0 72 72"><circle cx="36" cy="36" r="31" fill="#f7f6f9" stroke="url(#gTunes)" stroke-width="3.500"/><path d="M28 20l23-5v32c0 9-14 9-14 1 0-5 5-7 10-6V25l-15 3v25c0 9-14 9-14 1 0-5 5-7 10-6z" fill="url(#gNote)"/></svg></div>
    <div class="app"><svg viewBox="0 0 72 72"><circle cx="36" cy="36" r="31" fill="url(#gOrange)" stroke="#e9e9e9" stroke-width="2.500"/><path d="M35 25c-5-5-14-5-19-2v29c6-2 14-2 19 2zM37 25c5-5 14-5 19-2v29c-6-2-14-2-19 2z" fill="#f6f6f6"/></svg></div>
    <div class="app"><svg viewBox="0 0 72 72"><path d="M9 3h57q3 0 3 3v57q0 6-6 6H3V10q0-7 6-7z" fill="url(#gTree)"/><g fill="none" stroke="#f3f7fa"><path d="M32 66l2-30h3l2 30z" fill="#fff" stroke-width="1"/><path d="M35 48C30 40 24 36 12 32M37 46c4-8 12-12 22-15M35 40C32 30 26 22 22 15M37 38c2-10 8-17 13-23M36 38V10M36 30c-2-8-6-14-8-20M37 28c2-8 4-13 6-19M28 40c-6 0-12 2-18 2M45 40c6 0 12 1 17 2M30 43c-6 3-12 7-14 13M43 43c6 3 10 8 12 13" stroke-width="1.700"/><path d="M24 35c-6-6-10-8-14-9M20 34c-4 2-8 2-12 3M22 28c-3-4-6-7-11-9M29 24c-4-6-9-9-13-11M50 35c5-5 8-8 12-9M53 34c4 2 6 3 11 3M50 28c3-5 6-7 10-9M44 24c4-6 7-9 11-11M24 46c-6 1-10 3-13 6M48 46c6 1 10 3 13 6M31 20c-1-5-2-8-4-12M41 20c1-5 4-9 5-13M18 20l-2-6M54 20l3-6M33 16l-2-9M39 16l2-9M24 52l-2 8M49 52l1 8M15 38l-5 8M57 38l5 8" stroke-width=".9"/></g></svg></div>
    <div class="app"><svg viewBox="0 0 72 72"><g stroke="#10223f" stroke-width="1.300"><path d="M11 7l21-3v21l-21-1z" fill="#4cc3f0"/><path d="M32 4l11 3v8l9 2v11l-20-3z" fill="#1b86ad"/><path d="M11 16h32M43 15v12M36 6v19M40 7v19M47 17v9" fill="none" stroke-width="1"/></g><path d="M56 27c-4-4-8-10-7-18 5 0 9 3 10 7 2-6 7-9 13-9 1 9-3 15-11 19 3 6 3 12 1 19-4 15-15 23-29 23C15 68 1 57 0 40c0-8 5-15 14-15 16-1 32 5 42 2z" fill="#73a9fb" stroke="#11213f" stroke-width="1.800"/><path d="M1 44c7 6 17 6 26 2 0 9 3 16 9 21C18 70 4 58 1 44z" fill="#cfe0fb"/><path d="M1 44c7 5 17 5 25 0M44 26l10 3" fill="none" stroke="#11213f" stroke-width="1.800"/><circle cx="32.700" cy="40" r="6" fill="#fff" stroke="#11213f" stroke-width="1.500"/><circle cx="33" cy="40" r="3"/></svg></div>
    <div class="app on"><svg viewBox="0 0 72 72"><path d="M6 12q0-4 4-4h52q4 0 4 4l4 50q0 3-3 3H5q-3 0-3-3z" fill="#e9e9e9"/><path d="M13 5h46q4 0 4 4l3 43v4q0 4-4 4H10q-4 0-4-4v-4L9 9q0-4 4-4z" fill="#222"/><path d="M13 5h46q4 0 4 4l3 42H6L9 9q0-4 4-4z" fill="url(#gDark)"/><path d="M6 51h60v2H6z" fill="#3a3a3a"/><text x="36" y="41" text-anchor="middle" class="t-sub">S</text></svg></div>
    <div class="app q">?</div>
    <div class="app q">?</div>
    <div class="app"><svg viewBox="0 0 72 72"><circle cx="36" cy="36" r="36" fill="url(#gYin)"/><path d="M36 0a36 36 0 000 72c-2-14 0-18 0-25 3-8 2-20-9-20S10 40 14 60C-8 40 0 4 36 0z" fill="#6c6c6c"/><path d="M34 72C14 70 7 45 13 34c5-10 20-9 22 2 2 13 10 11 19 9 5 12-4 26-20 27z" fill="#0a0a0a"/><path d="M36 0c-8 14-10 24-7 28 9 0 8 18 16 18 10 0 16-6 15-19C59 10 48 2 36 0z" fill="#fff"/><circle cx="27" cy="36" r="3" fill="#fff"/><circle cx="45" cy="36" r="3" fill="#111"/></svg></div>
    <div class="app"><svg viewBox="0 0 72 72"><path d="M54 3l15 7v52l-15 7-29-27L10 55l-7-4V21l7-4 15 13zM54 22L36 36l18 14zM11 27v18l9-9z" fill="#1b80cc" fill-rule="evenodd" stroke="#dcebf7" stroke-width="1.200"/></svg></div>
    <div class="app on"><svg viewBox="0 0 72 72"><circle cx="36" cy="36" r="34" fill="#ffcf4b"/><path d="M36 36L7 18C20-4 56-4 66 20H36z" fill="#da4b3e"/><path d="M7 18C-6 38 6 68 34 70l16-26-14-8z" fill="#2da15e"/><path d="M36 20h30L50 44z" fill="#ffcf4b"/><circle cx="36" cy="36" r="15.500" fill="#fafafa"/><circle cx="36" cy="36" r="12.500" fill="#4f8bf3"/></svg></div>
    <div class="app on"><svg viewBox="0 0 72 72"><rect x="9" y="9" width="54" height="54" fill="url(#gIj)"/><path d="M9 28l8 12-8 14z" fill="#f98f3a"/><rect x="15" y="15" width="42" height="42" fill="#0b0b0b"/><text x="18" y="37" class="t-ij">IJ</text><path d="M19 50h16" stroke="#fff" stroke-width="3"/></svg></div>
    <div class="app"><svg viewBox="0 0 72 72"><circle cx="36" cy="36" r="31" fill="url(#gBlue)" stroke="#dfe9f1" stroke-width="2.500"/><path d="M39 16L19 55M33 16l20 39M12 38h48" stroke="#f4f8fb" stroke-width="4.500" stroke-linecap="round"/></svg><b class="badge">3</b></div>
    <div class="app"><svg viewBox="0 0 72 72"><rect x="4" y="6" width="64" height="60" rx="3" fill="url(#gSilver)"/><circle cx="36" cy="36" r="26" fill="#2a2c2e"/><circle cx="36" cy="36" r="22.500" fill="#383a3c" stroke="#b4b7b9" stroke-width="3" stroke-dasharray="2.600 2.100"/><circle cx="36" cy="36" r="18.500" fill="#3c3e40" stroke="#a9acae" stroke-width="4.500"/><path d="M36 36H54M36 36l-9-16M36 36l-9 16" stroke="#b9bcbe" stroke-width="3.800"/><circle cx="36" cy="36" r="4" fill="#85888a"/></svg></div>
    <div class="app on"><svg viewBox="0 0 72 72"><rect x="4.500" y="8.500" width="63" height="55" rx="4" fill="#0c0c0c" stroke="#a6a6a6" stroke-width="2"/><rect x="9" y="13" width="54" height="46" fill="#333"/><text x="12" y="28" class="t-term">&gt;_</text></svg></div>
    <div class="app on"><svg viewBox="0 0 72 72"><path d="M14 2c8-3 13 0 17 1 24-3 40 14 37 37 5 8 3 20-3 26-6 6-15 7-22 3C18 73 0 55 4 32-2 20 3 6 14 2z" fill="#1cb3ea"/><path d="M49 25c-4-8-24-8-24 2 0 11 25 6 25 18 0 11-23 11-27 1" fill="none" stroke="#fff" stroke-width="8.500" stroke-linecap="round"/></svg></div>
    <div class="app on"><svg viewBox="0 0 72 72"><circle cx="36" cy="43" r="28.500" fill="url(#gOrb)"/><path d="M29 12c2-10 10-12 12-3 2 10 2 26 1 38" fill="none" stroke="#000" stroke-width="4.500" stroke-linecap="round"/><path d="M63 3C60 22 51 42 39 56c-7 9-14 14-22 12" fill="none" stroke="#000" stroke-width="5" stroke-linecap="round"/><circle cx="17" cy="67" r="4.500"/></svg></div>
    <div class="app on"><svg viewBox="0 0 72 72"><path d="M13 10h46l5 48H8z" fill="#aab5ba"/><path d="M8 58h56v8H8z" fill="#757d81"/><circle cx="36" cy="40" r="21" fill="#b3bdc1" stroke="#d3dadd" stroke-width="1.500"/><circle cx="36" cy="41" r="7" fill="none" stroke="#8d979b" stroke-width="1.500"/><path d="M28 1h17v23h10L37 39 18 24h10z" fill="#a0a9ad"/><path d="M28 1h17v4H28z" fill="#6f787c"/><path d="M33 59h17v6H33z" fill="#222"/><path d="M36 59v6M39 59v6M42 59v6M45 59v6M48 59v6" stroke="#888"/></svg></div>
    <div class="app on"><svg viewBox="0 0 72 72"><path d="M12 7h55v40H12z" fill="#9a7442" stroke="#eee" stroke-width="1.500"/><path d="M3 20l54-9 7 42-53 10z" fill="#f5f5f5"/><path d="M6 22l48-8 6 35-47 10z" fill="#8ab8ee"/><path d="M9 38c12 1 30 0 48-5l3 16-47 10z" fill="#274b95"/><path d="M10 46c6-2 12 0 18-3l8 2-6 6 12-1-3 4-26 5z" fill="#dcd4c6"/><path d="M43 46h28l-3 21q-10 7-21 0z" fill="#857463"/><circle cx="57" cy="46" r="14" fill="#33373c" stroke="#cfcfcf" stroke-width="2"/><circle cx="57" cy="46" r="9.500" fill="#8796a8"/><path d="M48 49c5-3 12 2 18-1-2 10-15 10-18 1z" fill="#6f5a48"/></svg></div>
    <div class="sep"></div>
    <div class="app"><svg viewBox="0 0 72 72"><path d="M15 0h20l14 20v8H15z" fill="#f4f4f4"/><path d="M33 4h7v18h-7z" fill="#444"/><path d="M38 1l12 19h-9z" fill="#dcdcdc"/><path d="M5 16h20l6 4h32q4 0 4 3v36q0 4-4 4H9q-4 0-4-4z" fill="url(#gFold)"/></svg></div>
    <div class="app"><svg viewBox="0 0 72 72"><path d="M14 8l8-6 8 4 8-4 8 5 8-2 6 9H12z" fill="#eee"/><path d="M20 8l8 4-6 3zM36 3l9 11-10-2zM48 7l7 7-8 1z" fill="#495056"/><path d="M24 12l6-4 3 5z" fill="#54a7d8"/><path d="M9 9l8 55q1 5 8 5h22q7 0 8-5l8-55q-27 10-54 0z" fill="url(#gTrash)"/><path d="M16 22c10 8 24 6 38 2-6 8-20 8-30 4z" fill="#f5f5f5" opacity=".7"/><ellipse cx="36" cy="9" rx="27" ry="5" fill="none" stroke="#d5d5d5" stroke-width="1.600"/></svg></div>
  </div>
</div>
</body>
</html>
```
FILE: styles.css
```css
* { box-sizing: border-box; }
body { margin: 0; width: 2880px; height: 1800px; overflow: hidden; background: #0a0f0f; font-family: Inter, "Liberation Sans", sans-serif; color: #000; display: flex; flex-direction: column; }
svg { display: block; flex: none; overflow: visible; }
.defs { position: absolute; }
i, em { font-style: normal; }

/* system menu bar */
.menubar { height: 46px; border-bottom: 2px solid #15191f; background: linear-gradient(90deg, #f1f6f8, #e9eff6 40%, #e8eef7); display: flex; align-items: center; font-size: 28px; color: #3b4045; flex: none; }
.apple { width: 26px; height: 31px; margin: -3px 0 0 42px; }
.menus { display: flex; margin-left: 41px; letter-spacing: -.3px; }
.menus > * { white-space: nowrap; }
.m1 { width: 146px; font-weight: 600; letter-spacing: 0; } .m2 { width: 82px; } .m3 { width: 86px; } .m4 { width: 99px; } .m5 { width: 130px; } .m6 { width: 181px; } .m7 { width: 125px; } .m8 { width: 141px; } .m9 { width: 60px; }
.status { margin-left: auto; display: flex; align-items: center; padding-right: 45px; }
.s-skype { margin-left: 18px; } .s-wifi { margin-left: 14px; } .s-batt { margin-left: 26px; }
.clock { margin-left: 23px; width: 116px; white-space: nowrap; letter-spacing: 0; }
.s-find { margin-left: 33px; } .s-list { margin-left: 30px; }

/* browser window */
.window { height: 1654px; flex: none; display: flex; flex-direction: column; background: #f1f1f1; border-radius: 10px 10px 12px 12px; overflow: hidden; }
.tabstrip { height: 74px; flex: none; background: linear-gradient(#d2d3d3, #cbcdcd); border-bottom: 2px solid #8f8f8f; display: flex; position: relative; padding-left: 24px; }
.lights { display: flex; gap: 16px; padding-top: 26px; width: 120px; flex: none; }
.lights i { width: 24px; height: 24px; border-radius: 50%; border: 1px solid; }
.red { background: #fc605c; border-color: #e2463f !important; } .yellow { background: #fdbc40; border-color: #dfa023 !important; } .green { background: #34c84a; border-color: #27a835 !important; }
.tabs { display: flex; padding-top: 17px; flex: none; }
.tab { position: relative; width: 116px; height: 57px; margin-right: -28.500px; flex: none; display: flex; align-items: center; padding-left: 31px; }
.shape { position: absolute; left: 0; top: 0; width: 116px; height: 57px; }
.shape path { fill: #cfcfcf; stroke: #939393; stroke-width: 1.500; }
.active { z-index: 2; padding-left: 35px; }
.active .shape path { fill: #f1f1f1; }
.active .shape .fill { stroke: none; }
.active .shape { height: 58px; }
.fav { position: relative; width: 32px; height: 32px; }
.dk1 { fill: #0d6fac; } .dk2 { fill: #258cab; } .dk3 { fill: #1fa7dd; }
.tab span { position: relative; font-size: 24px; margin-left: 13px; width: 14px; overflow: hidden; white-space: nowrap; line-height: 34px; letter-spacing: -.5px; }
.tab.active span { margin-left: 0; width: 20px; }
.close { position: relative; width: 15px; height: 15px; margin-left: 11px; }
.close path, .shelfclose path { stroke: #333; stroke-width: 2.200; }
.newtab { width: 66px; height: 32px; margin: 33px 0 0 22px; }
.newtab path { fill: #d3d3d3; stroke: #9a9a9a; stroke-width: 1.500; }
.profile { margin-left: auto; display: flex; align-items: center; gap: 12px; height: 79px; font-size: 24px; width: 176px; letter-spacing: -.1px; }

.toolbar { height: 72px; flex: none; display: flex; align-items: center; }
.navicons { display: flex; gap: 28px; padding-left: 22px; width: 241px; flex: none; }
.navicons svg { width: 28px; height: 28px; fill: none; stroke: #6e6e6e; stroke-width: 2.600; }
.omnibox { width: 2286px; height: 54px; background: #fff; border: 2px solid #b8b8b8; border-radius: 7px; display: flex; align-items: center; padding: 0 13px 0 12px; flex: none; }
.url { font-size: 28px; margin-left: 12px; padding-top: 2px; letter-spacing: -.35px; }
.url i { color: #7c7c7c; }
.star { margin-left: auto; margin-right: -1px; }
.exts { display: flex; gap: 24px; margin-left: 21px; }
.exts svg { width: 32px; height: 32px; }

.bookmarks { height: 48px; flex: none; display: flex; align-items: center; border-bottom: 2px solid #cfcfcf; font-size: 24px; padding: 0 0 8px 27px; letter-spacing: -.13px; }
.bm { display: flex; align-items: center; white-space: nowrap; flex: none; }
.b1 { width: 123px; } .b1 em { margin-left: 9px; }
.b2 { width: 306px; } .b2 em { margin-left: 10px; }
.b3 { width: 57px; }
.b4 { width: 307px; letter-spacing: .23px; } .b4 em { margin-left: 11px; }
.b5 { width: 268px; letter-spacing: .23px; } .b5 em { margin-left: 8px; }
.b6 { width: 308px; letter-spacing: -.2px; } .b6 em { margin-left: 8px; }
.b7 { width: 160px; letter-spacing: .2px; } .b7 em { margin-left: 10px; }
.b8 { width: 307px; letter-spacing: .05px; } .b8 em { margin-left: 8px; }
.b9 { width: 202px; } .b9 em { margin-left: 12px; }
.b10 { width: 307px; } .b10 em { margin-left: 9px; }
.b11 { width: 165px; } .b11 em { margin-left: 11px; }
.b12 { width: 200px; letter-spacing: .1px; } .b12 em { margin-left: 11px; }
.more { margin-left: auto; margin-right: 20px; color: #555; font-size: 26px; }

/* web page */
.page { flex: 1; min-height: 0; background: #fff; overflow: hidden; font-family: "Liberation Sans", Arial, sans-serif; font-size: 28px; color: #555; }
.navbar { height: 102px; display: flex; background: linear-gradient(#0b5199, #0c4c8e 50%, #063563); border-bottom: 2px solid #022241; color: #fff; }
.brand { width: 208px; padding-left: 30px; font-size: 36px; line-height: 99px; letter-spacing: .25px; -webkit-text-stroke: .5px #fff; }
.navlink { width: 284px; padding-left: 30px; background: #052f57; line-height: 101px; -webkit-text-stroke: .6px #fff; white-space: nowrap; letter-spacing: .23px; }
.container { width: 2340px; margin: 16px auto 0; }
.panel { height: 1170px; border: 2px solid #ddd; border-radius: 8px; background: #fff; box-shadow: 0 2px 2px rgba(0,0,0,.05); overflow: hidden; }
.panel-heading { height: 82px; line-height: 81px; background: #36a3e6; border-bottom: 2px solid #ddd; color: #fff; padding-left: 30px; letter-spacing: .27px; -webkit-text-stroke: .6px #fff; }
.panel-body { padding: 30px; }
.well { border: 2px solid #e0e0e0; border-radius: 8px; background: #f4f4f4; box-shadow: inset 0 3px 3px rgba(0,0,0,.05); margin-bottom: 40px; padding: 0 68px; }
h2, h4 { margin: 0; font-weight: 400; color: #337fae; white-space: nowrap; }
h2 { font-size: 60px; line-height: 66px; -webkit-text-stroke: 2px #337fae; letter-spacing: 1.400px; }
h4 { font-size: 36px; line-height: 160px; -webkit-text-stroke: 1.300px #337fae; letter-spacing: .85px; }
.hero { height: 212px; background: #9bccfd; padding-top: 82px; }
.info { height: 120px; display: grid; grid-template-columns: repeat(4, 549px); align-items: center; white-space: nowrap; line-height: 34px; padding-top: 1px; letter-spacing: -.12px; }
.info .wide { letter-spacing: .08px; }
.field { height: 162px; }
.result { display: flex; padding: 0 60px; gap: 60px; }
.score { width: 494px; height: 324px; border-radius: 12px; background: #eee; padding: 140px 0 0 120px; flex: none; }
.score h2 { letter-spacing: .2px; }
table { width: 1602px; table-layout: fixed; border-collapse: separate; border-spacing: 0; align-self: flex-start; }
.c1 { width: 70px; } .c2 { width: 438px; } .c3 { width: 302px; } .c4 { width: 472px; } .c5 { width: 320px; }
th, td { text-align: left; padding: 1px 16px 0; height: 74px; line-height: 71px; border-top: 2px solid #ddd; white-space: nowrap; }
td { letter-spacing: .3px; }
th { letter-spacing: -.18px; }
th.wide { letter-spacing: .08px; }
thead th { height: 76px; border-top: 0; border-bottom: 4px solid #ddd; }
tbody tr:first-child > * { border-top: 0; height: 72px; }
tbody tr:nth-child(odd) { background: #f9f9f9; }
hr { margin: 40px 0; border: 0; height: 2px; background: #eee; }
.footer-panel { height: 80px; border: 2px solid #ddd; border-radius: 8px; background: #ddd; }

/* downloads shelf */
.shelf { height: 88px; flex: none; border-top: 2px solid #c4c4c4; background: linear-gradient(#f2f2f2, #e0e0e0); display: flex; padding: 8px 0 0 8px; font-size: 22px; letter-spacing: .05px; }
.dl { width: 412px; height: 64px; margin-right: 4px; border: 2px solid #bdbdbd; border-radius: 8px; background: linear-gradient(#fbfbfb, #e7e7e7); display: flex; align-items: center; padding-left: 22px; flex: none; }
.dl svg { width: 24px; height: 31px; }
.dl span { margin-left: 26px; width: 308px; white-space: nowrap; margin-top: -2px; }
.dl i { height: 56px; border-left: 2px solid #d0d0d0; display: flex; align-items: center; padding: 0 0 6px 8px; }
.dl i::after { content: ""; border: 5px solid transparent; border-top: 7px solid #000; border-bottom: 0; }
.showall { margin-left: 140px; width: 177px; height: 64px; border: 2px solid #bdbdbd; border-radius: 8px; background: linear-gradient(#fbfbfb, #e7e7e7); display: flex; align-items: center; padding-left: 23px; gap: 11px; white-space: nowrap; }
.showall span { margin-top: -2px; }
.shelfclose { width: 15px; height: 15px; margin: 26px 0 0 20px; }

/* desktop and dock */
.desktop { height: 100px; padding: 4px 60px 0; background: linear-gradient(90deg, #151d17, #050606 4%, #020303 96%, #122523); background-color: #000; }
.dock { height: 96px; border-radius: 10px 10px 0 0; background: linear-gradient(90deg, #565f5b, #5c645f 30%, #55605e 60%, #58655f 85%, #545c5f); display: flex; padding-left: 6.500px; }
.app { position: relative; width: 77.500px; height: 96px; padding: 9px 0 0 2.750px; flex: none; }
.app svg { width: 72px; height: 72px; }
.app.on::after { content: ""; position: absolute; left: 34px; top: 84px; width: 8px; height: 8px; border-radius: 50%; background: #000; }
.badge { position: absolute; right: -1px; top: 8px; width: 28px; height: 28px; border-radius: 50%; background: #f13f3b; color: #fff; font-size: 20px; font-weight: 400; line-height: 28px; text-align: center; }
.app.q { padding: 0; font-family: "Open Sans", Roboto, sans-serif; font-weight: 300; font-size: 76px; line-height: 88px; text-align: center; color: #b5b9b8; }
.sep { width: 2px; height: 72px; margin: 12px 17px 0 18px; background: #2f3738; flex: none; }

/* lettering inside icons */
.t-sk { font: 700 23px "Liberation Sans", sans-serif; fill: #eef3f8; }
.t-a { font: 700 42px "Liberation Serif", serif; fill: #d14e35; }
.t-f { font: 500 22px Inter, sans-serif; fill: #fff; }
.t-se { font: 700 19px "Liberation Sans", sans-serif; fill: #eee; }
.t-jan { font: 400 12px Inter, sans-serif; fill: #fff; }
.t-12 { font: 300 33px Inter, sans-serif; fill: #222; }
.t-280 { font: 700 9px "Liberation Sans", sans-serif; fill: #fff; }
.t-3d { font: 400 12px "Liberation Sans", sans-serif; fill: #333; }
.t-pg { font: 700 8px "Liberation Sans", sans-serif; fill: #fff; }
.t-sub { font: 600 38px Inter, sans-serif; fill: #fb9a25; }
.t-ij { font: 700 24px "Liberation Mono", monospace; fill: #fff; letter-spacing: -2px; }
.t-term { font: 700 17px "Liberation Mono", monospace; fill: #f2f2f2; }
```
